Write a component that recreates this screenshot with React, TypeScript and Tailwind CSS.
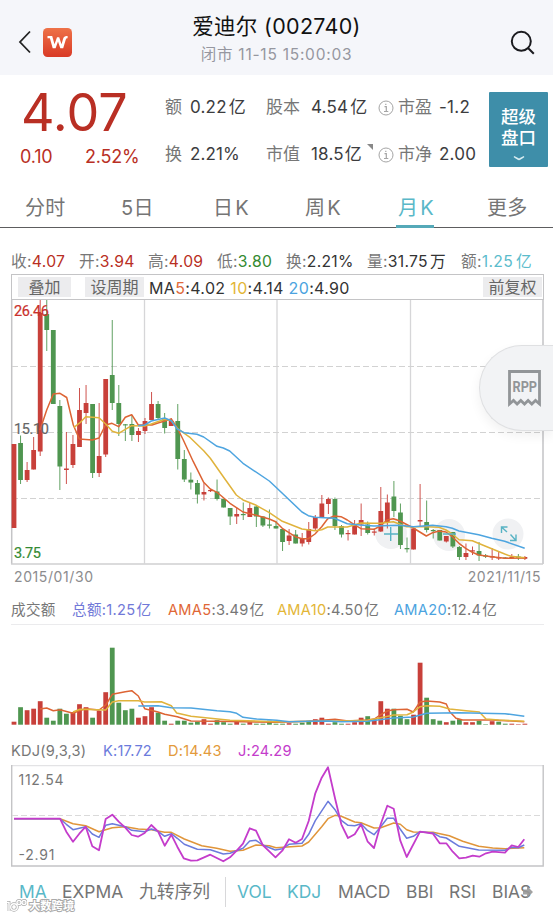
import React from 'react';

type Candle = [string, number, number, number, number];

const RED = '#c8403a';
const GREEN = '#4f9650';
const STEP = 6.55;
const START = 14;

// side, wick top, body top, body bottom, wick bottom
const CANDLES: Candle[] = [
  ['r', 444, 444, 528, 528], ['g', 435.5, 443, 480, 484], ['r', 462, 470, 480, 482], ['r', 437, 450, 469.5, 469.5],
  ['r', 299, 313, 451.5, 456], ['g', 300, 314, 330, 351], ['g', 330, 330, 404, 404], ['g', 400, 406, 466.5, 490],
  ['r', 432, 468.5, 470, 484], ['r', 435, 444, 465, 468], ['r', 388, 410, 447, 447], ['r', 385, 403, 413, 424],
  ['g', 404, 404, 473, 478], ['r', 403, 456, 473, 477], ['r', 379, 379, 454.5, 457], ['g', 320, 375, 403, 410],
  ['g', 385, 403, 424, 436], ['g', 424, 424.3, 425.4, 441], ['g', 415, 424, 435, 441], ['r', 428, 431, 435, 442],
  ['r', 418, 421, 431, 434], ['r', 392, 404, 420, 420], ['g', 401, 404, 418, 420], ['g', 413, 418, 428, 433.5],
  ['r', 418, 421, 426, 426], ['g', 404, 421, 459, 469.5], ['g', 450, 459, 479.5, 482], ['g', 472.5, 479.7, 482.5, 489.5],
  ['g', 480, 483, 494.5, 503.5], ['r', 483, 492, 494.5, 500.5], ['r', 489, 490, 491.2, 492], ['g', 479.5, 491.5, 499, 500.5],
  ['g', 499, 499, 507.5, 507.5], ['g', 508, 508, 516.5, 525], ['r', 507.5, 514, 516.5, 524], ['g', 502.5, 514, 515.2, 520],
  ['r', 502.5, 508, 517, 517], ['g', 506, 506.5, 516.5, 527], ['g', 516, 516.5, 525.5, 527], ['g', 509.5, 524.5, 525.7, 528.5],
  ['g', 521, 526, 528.5, 528.5], ['g', 529, 529, 542, 551], ['r', 529, 535.5, 541, 545], ['g', 530, 534.5, 543.5, 543.5],
  ['r', 533, 538, 543.5, 546.5], ['r', 522, 529, 542, 544.5], ['r', 515, 517, 528.5, 530.5], ['r', 495, 503.5, 517, 517],
  ['r', 497.5, 499, 504, 514], ['g', 497.5, 499, 526, 530], ['g', 525, 526, 534.5, 537.5], ['r', 530, 533, 534.2, 540.5],
  ['r', 520, 525.5, 534.5, 534.5], ['r', 503.5, 520, 524.5, 536], ['g', 521.5, 524.5, 533, 534.5], ['r', 528.5, 531.5, 532.7, 535.5],
  ['r', 487, 511, 531.5, 532], ['r', 494.5, 502.5, 522.5, 528.5], ['g', 481, 496.5, 511, 517], ['g', 503.5, 512.5, 545, 549],
  ['g', 537.5, 548, 549.3, 552.5], ['r', 528.5, 528.5, 549.5, 549.5], ['r', 484, 520, 521.5, 526.5], ['g', 500.5, 522, 530, 532.5],
  ['g', 529, 530, 531.2, 538.5], ['g', 530, 530, 540.5, 540.5], ['r', 536, 536, 541.5, 542.5], ['g', 532, 532, 546.5, 548],
  ['g', 546, 547, 557, 560], ['r', 543.5, 553, 557, 560], ['r', 546.5, 550.3, 551.5, 555], ['g', 542, 551, 555.5, 561],
  ['g', 554, 555.5, 556.7, 558], ['r', 548, 556, 557.5, 560], ['r', 551.5, 557, 558.5, 560], ['g', 557, 557.5, 558.5, 559],
  ['r', 554, 557, 558.5, 559], ['g', 554, 556.5, 558, 560], ['r', 556, 557, 558.8, 560],
];

const VOLUMES = [
  'r3', 'g17.5', 'r14.5', 'r16', 'r23.5', 'g7', 'g4', 'g16', 'g11', 'r12.5', 'r20.5', 'r17.5', 'g7', 'r14', 'r32.5', 'g77',
  'g22', 'g14.5', 'g16', 'r7', 'r8.5', 'r17.5', 'g12', 'g4', 'r1', 'g4', 'g4', 'g2', 'g3', 'r5.5', 'r1', 'g4.5',
  'g2.5', 'g1', 'r3', 'g1', 'r2.5', 'g1', 'g1', 'g4', 'g1', 'g1', 'r1.5', 'g1', 'g2', 'g4', 'r5.5', 'r7',
  'r1', 'g2.5', 'g1', 'r1', 'r2.5', 'r7', 'g8.5', 'r5.5', 'r23.5', 'r16', 'g16', 'g9', 'g5.5', 'r10', 'r62', 'g27',
  'g5.5', 'g4', 'r2.5', 'g4', 'g5.5', 'r2.5', 'r2.5', 'g4', 'g.5', 'r3.5', 'g3', 'g1', 'r1', 'r.5', 'r1',
];

const MA5 = '40,430 46.7,410 53.3,394 60,393.3 66.7,397.5 73.3,425 79.3,439 92.3,440 99,438 105.5,425 112,423.3 118.7,426.7 125.3,417.3 131.7,414.7 138.3,425 144.7,425 152,425 158,423 164.7,421 171.3,419 177.3,428 183.3,440 193.3,461.7 203.7,482.3 210.3,489 217,492.3 230,503.3 243,512 256.3,515.3 269.3,519 275.7,521.7 282.3,528.3 295.3,536.7 302,538.7 308.3,538.7 315,534 321.7,526.7 327.7,518.7 334.3,516 341,516.7 347.3,520 354.3,524.7 361,528.7 374,529.3 380.3,526 387,520 393.3,518.7 400,521 413.3,528 426.3,536 432.7,532.7 439,531 446,532 452.3,536.7 459,543.3 465.7,548.3 472.3,552.3 478.7,555 491.7,556.7 504.7,558.3 526,558';
const MA10 = '74,427.3 80,422.7 85.7,416.7 99,417.7 105.7,424 112.3,431.3 118.7,433.3 125.3,429.3 131.7,425.7 144.7,426 151.3,424 164.7,419.3 171.3,420.7 177.3,428.3 190.3,437.7 203.7,450.7 210.3,458.3 223.3,476.7 236.3,495 243,500 256.3,505.3 269.3,512.7 282.3,521.3 302,529 315,530.7 321.7,529.7 327.7,527 347.3,527 361,523 374,523.3 380.3,523.3 393.3,521.7 400,524.3 406.7,526.7 426.3,526.7 439,527.3 446,530 452.3,534 459,539.7 472.3,540.7 485,546 504.7,554 511,556.3 524.7,557.7';
const MA20 = '138.3,425.7 144.7,425 151.3,421 164.7,418 171.3,420.7 177.3,429 184,432.7 197,434.3 203.7,437 217,446.3 223.3,448 229.7,451 243,463.3 269.3,481 275.7,487 302,512 308.3,515.7 315,517.3 334.3,518.3 347.3,523.7 360,525 374,526 400,525.3 413.3,526.7 432.7,525.3 446,526.7 452.3,528.3 459,531 478.7,534.7 491.7,538.3 504.7,541.3 524.7,548.3';

const AMA5 = '40,709 46.7,708 53.3,710.7 60,709.7 73,713.3 79.3,710.7 85.7,708.7 99,710 105.7,705 112.3,694.3 125.3,691.7 131.7,690.7 138.3,696 144.7,708.7 158,712 164.7,714.3 177.3,716.7 191,721 216.7,721.3 276.7,722.3 308.7,721.3 328.3,719.7 335,719.3 348,721 367.7,720 374.3,719 380.7,714.7 387.3,711 393.7,709.7 407,709.3 413.3,712 420,702 426.7,701 439.7,702 446.3,704 449.7,711.7 456,718.3 462.7,720 492,720 524.3,721.7';
const AMA10 = '73,712 80,709.3 105.7,710 112.3,702 118.7,700.7 138.3,700.7 144.7,702 161.3,701.7 171.3,705.7 176.7,713 191,716.3 210.3,718.3 230,720.3 276.7,721.7 341.3,721 367.7,720.3 380.7,717.7 393.7,715 407,714.7 413.3,712 420,706.7 426.7,705.7 439.7,706.3 449.7,709 466,710.7 479.3,712 486,719 498.7,720 524.3,721.3';
const AMA20 = '138.3,706 158,705.7 171.3,707.7 191,708 217,710.7 230,711.7 236.7,713.3 243,717.3 256.7,719 276.7,720.3 289,721.7 308.7,721.3 328.3,721 341.3,721.7 367.7,721.3 393.7,718 413.3,717 426.7,713.3 459.3,712.7 505,713.7 524.3,716.3';

const K_LINE = '14,818.7 60,818.7 66.3,824.3 73,829.7 85.7,826.7 92.3,834 99,837.3 105.7,825.3 112.3,823.7 125.3,826.7 131.7,830.3 144.7,831.7 151.3,829 158,831.3 164.7,836.3 171.3,833.7 177.3,838.3 184.3,844.3 197.3,849.3 210.3,849.7 223.3,854 230,853.3 243,848.3 249.7,841 256,840.3 262.7,845 275.3,850 282.3,848.7 289,844.3 302,843.3 308.7,834.3 315.3,820.7 328,801.3 335,809.7 341.3,820.3 348,825.3 354.7,825.7 361,823.7 367.7,830.7 374,834.7 380.7,826.7 387.3,818.3 393.7,818.3 400.3,829.3 406.7,838.3 413.3,836.3 420,831.7 433,833 439.7,836.7 446.3,838 459.3,846.3 478.7,850 505,850.3 511.7,847.3 518.3,847.7 524.3,845';
const D_LINE = '14,818.7 60,818.7 73,823.7 85.7,825.7 99,831.7 112.3,827.7 125.3,826.7 138.3,829 151.3,829.7 164.7,832.3 171.3,832.3 184.3,839 201.7,845.7 216.7,848.3 230,851.3 243,850.3 256,845 269.3,845.7 276,847.7 302,846 308.7,842 321.7,826.7 328,818.7 335,815.3 341.3,816.3 354.7,822 361,822.7 374,828 380.7,827.7 393.7,823 400.3,824.3 406.7,829.7 413.3,832 433,832.3 449.3,835.7 462.7,841.3 478.7,846.3 492.7,848 505,848.7 524.3,847.7';
const J_LINE = '14,818.7 60,818.7 66.3,831.7 73,841.7 79.3,833.7 85.7,826.7 92.3,846.3 99,850.3 105.7,819 112.3,814.7 118.7,821.7 125.3,827.7 131.7,835 138,836.7 144.7,833 151.3,825 158,831.3 164.7,845.7 171.3,834.7 177.3,846.7 183.7,858.3 191,860.7 197.3,860.3 210.3,854.7 223.3,861.3 230,857.3 236.7,850.7 243,843.7 249.7,828.3 256,830.7 262.7,845 269.3,851.3 275.5,857.3 282.3,850.7 289,839.3 295.7,842.7 302,839 308.7,821 315.3,793.3 321.7,777.7 328,767.3 335,798.3 341.3,824.3 348,838 354.7,834.3 361,824.3 367.7,841.7 374,848 380.7,824.3 387.3,805.7 393.7,808.7 400.3,840.7 406.7,857 420,831.7 433,833.7 439.7,843.3 446.3,843.3 452.7,851.7 459.3,858.3 466,857.7 472.7,855.7 479.3,856.7 486,853.3 492.7,851.7 505,852.7 511.7,845.3 518.3,847 524.3,839.3';

interface LineProps {
  points: string;
  color: string;
  width?: number;
}

function Line({ points, color, width = 1.5 }: LineProps) {
  return <polyline points={points} fill="none" stroke={color} strokeWidth={width} strokeLinejoin="round" />;
}

function Header() {
  return (
    <header className="flex h-[75px] items-center bg-[#f5f6fa]">
      <div className="flex w-[120px] items-center pt-[9px] pl-[18px]">
        <svg width="14" height="24" viewBox="0 0 14 24" fill="none" stroke="#222" strokeWidth="1.8">
          <path d="M12 1.5 2 12l10 10.5" />
        </svg>
        <svg className="ml-[11px]" width="29" height="29" viewBox="0 0 29 29">
          <defs>
            <linearGradient id="logo" x1="0" y1="0" x2="0" y2="1">
              <stop offset="0" stopColor="#ee7248" />
              <stop offset="1" stopColor="#d93a26" />
            </linearGradient>
          </defs>
          <rect width="29" height="29" rx="4.5" fill="url(#logo)" />
          <path d="M4.500 8h4.700l2.300 8.200L14 9.300h2.200l2.300 6.900 1.600-5.500C20.700 8.800 21.800 8 23.600 8h1v2.200c-1 0-1.500.5-1.800 1.400l-2.600 8.600h-2.900l-2.300-6.700-2.400 6.700H9.700L6.900 10.300H4.500z" fill="#fff" />
        </svg>
      </div>
      <div className="flex flex-1 flex-col items-center pt-[3px] whitespace-nowrap">
        <h1 className="text-[21.5px] leading-[30px] tracking-[0.3px] text-[#111]">爱迪尔 (002740)</h1>
        <p className="mt-[2px] text-[15.5px] leading-6 tracking-[0.75px] text-[#9697a0]">闭市 11-15 15:00:03</p>
      </div>
      <div className="flex w-[120px] justify-end pt-[10px] pr-[18px]">
        <svg width="25" height="25" viewBox="0 0 25 25" fill="none" stroke="#1b1b1f" strokeWidth="2">
          <circle cx="11.3" cy="11.3" r="9.5" />
          <path d="m18 18 5.8 5.8" />
        </svg>
      </div>
    </header>
  );
}

function Info() {
  return (
    <svg className="mr-[4px]" width="16" height="16" viewBox="0 0 16 16" fill="none" stroke="#a5a5a5">
      <circle cx="8" cy="8" r="7" />
      <path d="M6.5 6.7h1.8v4.6M6 11.5h4.3M7.8 3.7v1.3" strokeWidth="1.2" />
    </svg>
  );
}

function Quote() {
  return (
    <section className="flex h-[112px] whitespace-nowrap">
      <div className="w-[165px] pl-5 text-[#b92f24]">
        <div className="mt-[8px] ml-[1px] h-[60px] text-[52px] leading-[60px]">4.07</div>
        <div className="mt-[2px] flex text-[18px] leading-6 tracking-[-0.2px]">
          <span className="w-[65px]">0.10</span>
          <span>2.52%</span>
        </div>
      </div>
      <div className="w-[324px] pt-[19px] text-[17px] text-[#3c3c3e]">
        <div className="flex h-7 items-center">
          <span className="w-[25px] text-[#777]">额</span>
          <span className="w-[76px] tracking-[0.2px]">0.22<span className="ml-[2px]">亿</span></span>
          <span className="w-[45px] text-[#777]">股本</span>
          <span className="w-[67px] tracking-[0.2px]">4.54<span className="ml-[2px]">亿</span></span>
          <Info />
          <span className="w-[41px] text-[#777]">市盈</span>
          <span className="tracking-[0.3px]">-1.2</span>
        </div>
        <div className="mt-[19px] flex h-7 items-center">
          <span className="w-[25px] text-[#777]">换</span>
          <span className="w-[76px] tracking-[0.1px]">2.21%</span>
          <span className="w-[45px] text-[#777]">市值</span>
          <span className="w-[67px] tracking-[0.2px]">18.5<span className="ml-[1px]">亿</span><svg className="ml-[5px] inline align-[10px]" width="6" height="6"><path d="M0 0h6v6z" fill="#888" /></svg></span>
          <Info />
          <span className="w-[41px] text-[#777]">市净</span>
          <span className="tracking-[0.2px]">2.00</span>
        </div>
      </div>
      <button className="mt-[17px] flex h-[75px] w-[59px] flex-col items-center rounded-[1px] bg-[#3e8ea9] pt-[15px] text-[17.5px] leading-[20.5px] font-medium text-white">
        <span>超级</span>
        <span>盘口</span>
        <svg className="mt-[7px]" width="12" height="7" viewBox="0 0 12 7" fill="none" stroke="#d9edf2" strokeWidth="1.5">
          <path d="M1 1.500c2 1.500 3.300 1.800 5 3 1.700-1.200 3-1.500 5-3" />
        </svg>
      </button>
    </section>
  );
}

function PeriodTabs() {
  return (
    <nav className="flex h-[41px] border-b-[1.5px] border-[#5d5d5f] text-[20px] leading-[42px] tracking-[0.3px] whitespace-nowrap text-[#757575]">
      <span className="w-[121px] pl-[25px]">分时</span>
      <span className="w-[92px]">5日</span>
      <span className="w-[92px]">日<span className="ml-[2px]">K</span></span>
      <span className="w-[91px]">周<span className="ml-[2px]">K</span></span>
      <span className="h-[41px] w-[38px] border-b-[3px] border-[#55a9b8] pl-[2px] text-[#59b8c8]">月<span className="ml-[2px]">K</span></span>
      <span className="pl-[53px]">更多</span>
    </nav>
  );
}

function Summary() {
  return (
    <div className="flex h-[46px] items-end pl-[11px] text-[15.7px] leading-6 tracking-[0.3px] whitespace-nowrap text-[#777]">
      <span className="w-[68px]">收:<b className="font-normal text-[#b92f24]">4.07</b></span>
      <span className="w-[69px]">开:<b className="font-normal text-[#b92f24]">3.94</b></span>
      <span className="w-[69px]">高:<b className="font-normal text-[#b92f24]">4.09</b></span>
      <span className="w-[69px]">低:<b className="font-normal text-[#348a32]">3.80</b></span>
      <span className="w-[81px]">换:<b className="font-normal text-[#333]">2.21%</b></span>
      <span className="w-[94px]">量:<b className="font-normal text-[#333]">31.75<i className="ml-[2px] not-italic">万</i></b></span>
      <span>额:<b className="font-normal text-[#5bbccc]">1.25<i className="ml-[3px] not-italic">亿</i></b></span>
    </div>
  );
}

function PriceChart() {
  return (
    <div>
      <div className="mr-[9px] ml-[11px] flex h-[26px] items-center border border-[#c4c4c6] text-[16px] leading-5 whitespace-nowrap text-[#666]">
        <span className="ml-[6px] h-5 w-[53px] bg-[#ececee] text-center">叠加</span>
        <span className="ml-[14px] h-5 w-[59px] bg-[#ececee] text-center">设周期</span>
        <span className="ml-[5px] flex-1 pt-[2px] tracking-[0.34px] text-[#333]">
          MA<b className="font-normal text-[#e0693a]">5</b>:4.02 <b className="font-normal text-[#e3b637]">10</b>:4.14 <b className="font-normal text-[#4ba3e0]">20</b>:4.90
        </span>
        <span className="mr-[1px] h-5 w-[59px] bg-[#ececee] text-center">前复权</span>
      </div>
      <svg className="block" width="553" height="266" viewBox="0 300 553 266">
        <path d="M11.7 298v266M543 298v266" stroke="#c4c4c6" strokeWidth="1.5" />
        <path d="M11 564h532" stroke="#cfcfd1" strokeWidth="1.3" />
        <path d="M144.5 300v264M277 300v264M410.5 300v264" stroke="#d6d6d8" strokeWidth="1.3" />
        <path d="M12 366.5h531M12 432.5h531M12 498.5h531" stroke="#d2d2d2" strokeDasharray="6 3" />
        <g fill="#f0f1f3">
          <circle cx="391" cy="533" r="16" />
          <circle cx="449" cy="535" r="16" />
          <circle cx="508" cy="534" r="15.5" />
        </g>
        {CANDLES.map(([side, high, top, bottom, low], i) => {
          const x = START + STEP * i;
          const color = side === 'r' ? RED : GREEN;
          return (
            <g key={i}>
              <path d={`M${x} ${high}V${low}`} stroke={color} strokeWidth="0.9" />
              <rect x={x - 2.4} y={top} width="4.8" height={bottom - top} fill={color} />
            </g>
          );
        })}
        <Line points={MA5} color="#dd6434" />
        <Line points={MA10} color="#e0b33c" />
        <Line points={MA20} color="#4ea5e0" />
        <g fill="none" stroke="#58b3c4" strokeWidth="1.4">
          <path d="M384 534h14M390.7 527v14M443 534h13" />
          <path d="m502 527.5 5 4.5M501.5 533v-6h6M510.5 534.5l5 5.5M516 534.500v6h-6" />
        </g>
        <g className="font-[Roboto] text-[14.5px]" strokeWidth="0.2">
          <text x="14" y="315.500" fill="#c9302c" stroke="#c9302c" textLength="35">26.46</text>
          <text x="14" y="433.500" fill="#666" stroke="#666" textLength="35">15.10</text>
          <text x="14" y="558" fill="#348a32" stroke="#348a32" textLength="27">3.75</text>
        </g>
      </svg>
      <div className="flex h-[22px] justify-between pr-[12px] pl-[14px] text-[14px] leading-[22px] tracking-[0.6px] text-[#8c8c8e]">
        <span>2015/01/30</span>
        <span>2021/11/15</span>
      </div>
    </div>
  );
}

function Yi() {
  return <span className="ml-[1px]">亿</span>;
}

function VolumeChart() {
  return (
    <section>
      <div className="mr-[9px] ml-[11px] flex h-[37px] items-center border-b-[1.5px] border-[#ebebed] pt-[9px] text-[14.6px] tracking-[0.3px] whitespace-nowrap text-[#777]">
        <span className="w-[61px]">成交额</span>
        <span className="w-[96px] text-[#7179d8]">总额:1.25<Yi /></span>
        <span className="w-[109px]"><b className="font-normal text-[#df6736]">AMA5</b>:3.49<Yi /></span>
        <span className="w-[117px]"><b className="font-normal text-[#e3b637]">AMA10</b>:4.50<Yi /></span>
        <span><b className="font-normal text-[#4ba3e0]">AMA20</b>:12.4<Yi /></span>
      </div>
      <svg className="block" width="553" height="115" viewBox="0 625 553 115">
        {VOLUMES.map((item, i) => {
          const height = Number(item.slice(1));
          return <rect key={i} x={START + STEP * i - 2.4} y={724.7 - height} width="4.8" height={height} fill={item[0] === 'r' ? RED : GREEN} />;
        })}
        <Line points={AMA5} color="#dd6434" />
        <Line points={AMA10} color="#e0b33c" />
        <Line points={AMA20} color="#4ea5e0" />
      </svg>
    </section>
  );
}

function KdjChart() {
  return (
    <section>
      <div className="flex h-[25px] items-center pb-[3px] pl-[11px] text-[14.6px] leading-[22px] tracking-[0.2px] whitespace-nowrap text-[#777]">
        <span className="w-[92px]">KDJ(9,3,3)</span>
        <span className="w-[65px] text-[#6b7bdc]">K:17.72</span>
        <span className="w-[70px] text-[#e39a3b]">D:14.43</span>
        <span className="text-[#c43ccb]">J:24.29</span>
      </div>
      <svg className="block" width="553" height="102" viewBox="0 765 553 102">
        <path d="M11 765.500h532" stroke="#e3e3e5" strokeWidth="1.3" />
        <path d="M11.700 765v101h531.500v-101" fill="none" stroke="#c4c4c6" strokeWidth="1.4" />
        <path d="M12 815.500h531" stroke="#dadada" strokeDasharray="6 3" />
        <Line points={D_LINE} color="#e0953a" />
        <Line points={K_LINE} color="#6b7bdc" />
        <Line points={J_LINE} color="#c43ccb" width={1.8} />
        <g className="text-[14px]" fill="#777">
          <text x="18.5" y="785" textLength="45">112.54</text>
          <text x="18.5" y="859.5" textLength="36">-2.91</text>
        </g>
      </svg>
    </section>
  );
}

function IndicatorTabs() {
  return (
    <nav className="flex h-[50px] items-center pl-[19px] text-[17.4px] whitespace-nowrap text-[#757575]">
      <span className="w-[43px] text-[#59b8c8]">MA</span>
      <span className="w-[77px]">EXPMA</span>
      <span className="w-[86px] text-[17.800px]">九转序列</span>
      <span className="h-[30px] w-[12px] border-l border-[#d8d8da]" />
      <span className="w-[50px] text-[#59b8c8]">VOL</span>
      <span className="w-[51px] text-[#59b8c8]">KDJ</span>
      <span className="w-[68px]">MACD</span>
      <span className="w-[43px]">BBI</span>
      <span className="w-[43px]">RSI</span>
      <span className="w-[31px]">BIAS</span>
      <svg className="relative" width="10" height="12" viewBox="0 0 10 12" fill="#999" opacity="0.9">
        <path d="M0 3.500h4V0l6 6-6 6V8.500H0z" />
      </svg>
    </nav>
  );
}

function RppButton() {
  return (
    <button className="absolute top-[345px] right-0 flex h-[86px] w-[74px] items-center rounded-l-full border border-r-0 border-[#dfe0e2] bg-[#f2f3f5] pl-[27px] shadow-[0_5px_12px_rgba(0,0,0,0.06)]">
      <svg width="35" height="39" viewBox="0 0 35 39" fill="none">
        <path d="M2.500 35V2.500h30V35l-4-3.500-3.700 3.500-3.700-3.500-3.600 3.500-3.700-3.500-3.700 3.500-3.600-3.500z" stroke="#929598" strokeWidth="2.8" />
        <text x="5.5" y="22.500" textLength="24.500" lengthAdjust="spacingAndGlyphs" fill="#929598" className="font-[Roboto] text-[14px] font-bold">RPP</text>
      </svg>
    </button>
  );
}

function Watermark() {
  return (
    <div className="absolute bottom-[3px] left-[6px] flex items-center">
      <svg width="21" height="14" viewBox="0 0 21 14" fill="none">
        <g stroke="#aaa" strokeWidth="2.8">
          <path d="M1 3.500h2V12" />
          <circle cx="8" cy="8" r="3.300" />
          <circle cx="13" cy="3.500" r="2" />
          <circle cx="18" cy="3.500" r="2" />
        </g>
        <g stroke="#fff" strokeWidth="1.4">
          <path d="M1 3.500h2V12" />
          <circle cx="8" cy="8" r="3.300" />
          <circle cx="13" cy="3.500" r="2" />
          <circle cx="18" cy="3.500" r="2" />
        </g>
      </svg>
      <span className="ml-[2px] text-[11.3px] leading-4 font-bold text-white [-webkit-text-stroke:2px_#aaa] [paint-order:stroke_fill]">大数跨境</span>
    </div>
  );
}

export default function App() {
  return (
    <main className="relative h-[917px] w-[553px] overflow-hidden bg-white font-[Inter,'Noto_Sans_CJK_SC',sans-serif]">
      <Header />
      <Quote />
      <PeriodTabs />
      <Summary />
      <PriceChart />
      <VolumeChart />
      <KdjChart />
      <IndicatorTabs />
      <RppButton />
      <Watermark />
    </main>
  );
}
